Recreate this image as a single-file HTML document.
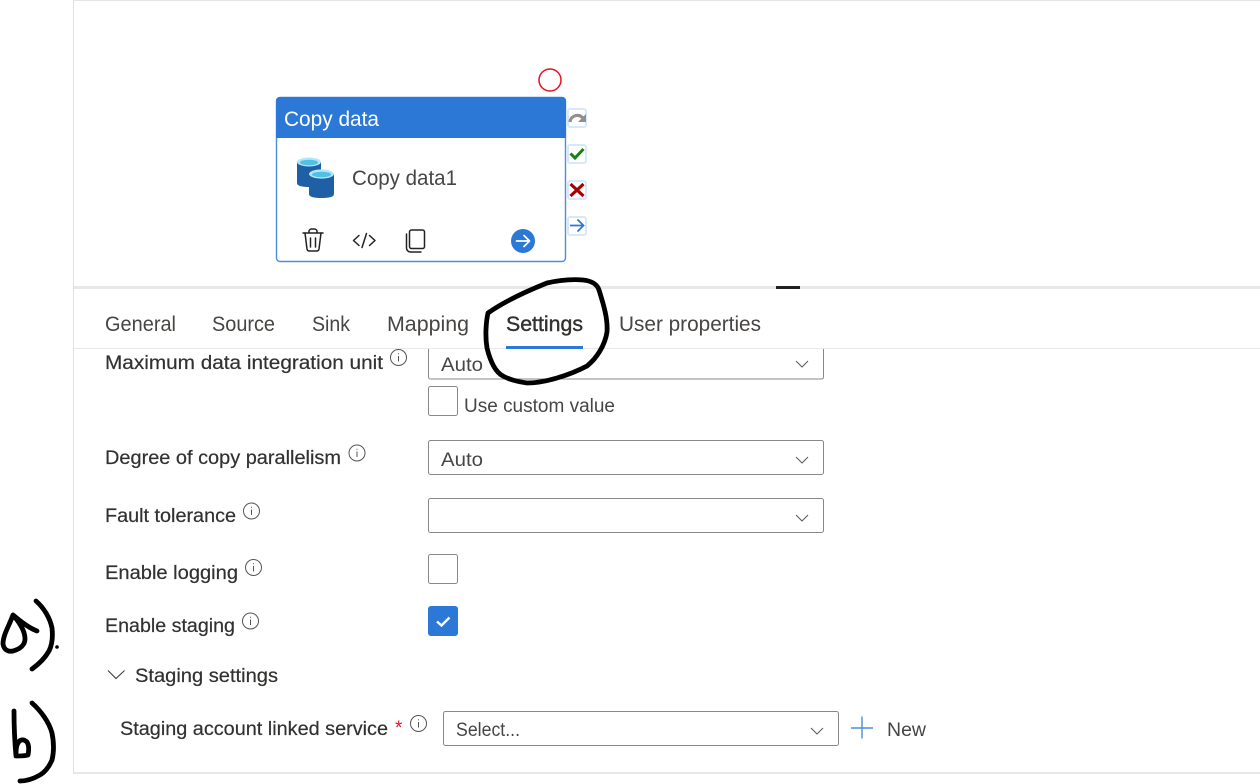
<!DOCTYPE html>
<html><head><meta charset="utf-8"><style>
html,body{margin:0;padding:0;background:#fff;width:1260px;height:784px;overflow:hidden}
svg{display:block}
text{font-family:"Liberation Sans",Arial,sans-serif;fill:#323130}
.l{font-size:19px;stroke:#323130;stroke-width:.2px}
.t{font-size:21px;fill:#484644}
.v{font-size:19px;fill:#484644}
.i{fill:none;stroke:#555;stroke-width:1}
.s{fill:#fff;stroke:#8a8886;stroke-width:1}
.c{fill:none;stroke:#605e5c;stroke-width:1.1}
.h{fill:none;stroke:#000;stroke-width:4.8;stroke-linecap:round;stroke-linejoin:round}
</style></head><body>
<svg width="1260" height="784" viewBox="0 0 1260 784" xmlns="http://www.w3.org/2000/svg">
<defs>
<g id="info"><circle cx="0" cy="0" r="8" class="i"/><path d="M0 -1.5V4M0 -4.3V-3.2" class="i"/></g>
</defs>
<!-- frame -->
<path d="M73.5 0V773.5H1260" fill="none" stroke="#e1e1e1" stroke-width="1"/>
<rect x="73" y="0" width="1187" height="1" fill="#e6e6e6"/>
<rect x="74" y="772" width="1186" height="2" fill="#e8e8e8"/>
<rect x="74" y="286" width="1186" height="3" fill="#e8e8e8"/>
<rect x="776" y="286" width="24" height="3" fill="#222"/>
<rect x="74" y="348" width="1186" height="1" fill="#e8e8e8"/>

<!-- red circle -->
<circle cx="550" cy="80" r="11" fill="none" stroke="#e81123" stroke-width="1.500"/>

<!-- activity -->
<rect x="276.500" y="97.500" width="289" height="164" rx="3.500" fill="#fff" stroke="#4a8fdc" stroke-width="1.400"/>
<path d="M276 101a4 4 0 0 1 4-4H562a4 4 0 0 1 4 4V138H276Z" fill="#2b78d6"/>
<text x="284" y="126" font-size="21" style="fill:#fff" textLength="95" lengthAdjust="spacingAndGlyphs">Copy data</text>
<text x="352" y="185" font-size="21" style="fill:#484644" textLength="105" lengthAdjust="spacingAndGlyphs">Copy data1</text>
<!-- db icon -->
<path d="M297 162V183c0 3 5 4 12 4s12-1 12-4V162Z" fill="#1f5fa6"/>
<ellipse cx="309" cy="162" rx="12" ry="4.500" fill="#b5e6f5"/><ellipse cx="309" cy="162.500" rx="9" ry="2.800" fill="#4fc0e6"/>
<path d="M309 174V194c0 3 5 4 12.500 4s12.500-1 12.500-4V174Z" fill="#1f5fa6"/>
<ellipse cx="321.500" cy="174" rx="12.500" ry="4.600" fill="#b5e6f5"/><ellipse cx="321.500" cy="174.500" rx="9.500" ry="2.800" fill="#4fc0e6"/>
<!-- trash -->
<g fill="none" stroke="#222" stroke-width="1.500" stroke-linecap="round" stroke-linejoin="round">
<path d="M303 233H323M309 233V231.500a2.500 2.500 0 0 1 2.500-2.500h3a2.500 2.500 0 0 1 2.500 2.500V233"/>
<path d="M305 233L307 249a2.500 2.500 0 0 0 2.500 2H316.500a2.500 2.500 0 0 0 2.500-2L321 233"/>
<path d="M310.500 238V247M315.500 238V247"/>
<!-- code -->
<path d="M359 235.500L353.500 240.500L359 245.500M369.500 235.500L375 240.500L369.500 245.500"/>
<path d="M366.500 233.500L362 247.500"/>
<!-- copy -->
<rect x="409.500" y="230" width="15" height="18.500" rx="2"/>
<path d="M406.500 234V248a4 4 0 0 0 4 4H421"/>
</g>
<circle cx="523" cy="241" r="12" fill="#2b78d6"/>
<path d="M516.500 241H529M524 235.500L529.500 241L524 246.500" fill="none" stroke="#fff" stroke-width="1.700" stroke-linecap="round" stroke-linejoin="round"/>
<!-- side buttons -->
<g fill="#fff" stroke="#d9e7fa" stroke-width="2">
<rect x="568" y="109" width="18" height="18" rx="2"/>
<rect x="568" y="145" width="18" height="18" rx="2"/>
<rect x="568" y="181" width="18" height="18" rx="2"/>
<rect x="568" y="217" width="18" height="18" rx="2"/>
</g>
<path d="M570 122C571 115 579 113 584 119" fill="none" stroke="#8f8f8f" stroke-width="3.200"/>
<path d="M578 122H586V114Z" fill="#8f8f8f"/>
<path d="M570.500 153.500L575 158L583.500 149" fill="none" stroke="#1a7f0e" stroke-width="3"/>
<path d="M570.500 184L583.500 196M583.500 184L570.500 196" fill="none" stroke="#a80000" stroke-width="3.200"/>
<path d="M570 225.500H583M577.500 219.500L583.500 225.500L577.500 231.500" fill="none" stroke="#2b78d6" stroke-width="1.800"/>

<!-- tabs -->
<text class="t" x="105" y="331" textLength="71" lengthAdjust="spacingAndGlyphs">General</text>
<text class="t" x="212" y="331" textLength="63" lengthAdjust="spacingAndGlyphs">Source</text>
<text class="t" x="312" y="331" textLength="38" lengthAdjust="spacingAndGlyphs">Sink</text>
<text class="t" x="387" y="331" textLength="82" lengthAdjust="spacingAndGlyphs">Mapping</text>
<text class="t" x="506" y="331" textLength="77" lengthAdjust="spacingAndGlyphs" style="fill:#323130;stroke:#323130;stroke-width:.4px">Settings</text>
<text class="t" x="619" y="331" textLength="142" lengthAdjust="spacingAndGlyphs">User properties</text>
<rect x="506" y="346" width="77" height="3" fill="#2b78d6"/>

<!-- labels -->
<text class="l" x="105" y="369" textLength="278" lengthAdjust="spacingAndGlyphs">Maximum data integration unit</text>
<use href="#info" x="398.500" y="357.500"/>
<text class="l" x="105" y="464" textLength="236" lengthAdjust="spacingAndGlyphs">Degree of copy parallelism</text>
<use href="#info" x="357" y="453"/>
<text class="l" x="105" y="522" textLength="131" lengthAdjust="spacingAndGlyphs">Fault tolerance</text>
<use href="#info" x="251.500" y="511"/>
<text class="l" x="105" y="579" textLength="133" lengthAdjust="spacingAndGlyphs">Enable logging</text>
<use href="#info" x="253.500" y="567.500"/>
<text class="l" x="105" y="632" textLength="130" lengthAdjust="spacingAndGlyphs">Enable staging</text>
<use href="#info" x="250.500" y="621"/>
<path d="M108 670.500L116 678.500L124.500 670.500" fill="none" stroke="#484644" stroke-width="1.200"/>
<text class="l" x="135" y="682" textLength="143" lengthAdjust="spacingAndGlyphs">Staging settings</text>
<text class="l" x="120" y="735" textLength="268" lengthAdjust="spacingAndGlyphs">Staging account linked service</text>
<text x="395" y="734" font-size="19" style="fill:#e81123">*</text>
<use href="#info" x="418.500" y="723.500"/>

<!-- inputs -->
<path d="M428.500 349V377a2 2 0 0 0 2 2H821.500a2 2 0 0 0 2-2V349" fill="#fff" stroke="#8a8886"/>
<text class="v" x="441" y="371" textLength="42" lengthAdjust="spacingAndGlyphs">Auto</text>
<path d="M796 361L802 367L808 361" class="c"/>
<rect x="428.500" y="386.500" width="29" height="29" rx="2" class="s"/>
<text class="v" x="464" y="412" textLength="151" lengthAdjust="spacingAndGlyphs">Use custom value</text>

<rect x="428.500" y="440.500" width="395" height="34" rx="2" class="s"/>
<text class="v" x="441" y="466" textLength="42" lengthAdjust="spacingAndGlyphs">Auto</text>
<path d="M796 457L802 463L808 457" class="c"/>

<rect x="428.500" y="498.500" width="395" height="34" rx="2" class="s"/>
<path d="M796 515L802 521L808 515" class="c"/>

<rect x="428.500" y="554.500" width="29" height="29" rx="2" class="s"/>
<rect x="428" y="606" width="30" height="30" rx="3" fill="#2b78d6"/>
<path d="M437 621.500L441.500 625.500L449.500 617.500" fill="none" stroke="#fff" stroke-width="2.400"/>

<rect x="443.500" y="711.500" width="395" height="34" rx="2" class="s"/>
<text class="v" x="456" y="736" textLength="64" lengthAdjust="spacingAndGlyphs">Select...</text>
<path d="M811 728L817 734L823 728" class="c"/>
<path d="M851 728H873M862 716.500V738.500" fill="none" stroke="#4a8fdc" stroke-width="1.400"/>
<text class="v" x="887" y="736" textLength="39" lengthAdjust="spacingAndGlyphs">New</text>

<!-- handwriting -->
<path class="h" d="M488 313C505 301 527 291 547 283C560 280 572 279 583 280C592 281 597 284 599 290C603 303 608 318 607 332C605 345 597 358 587 366C570 375 545 383 527 383C518 382 508 379 503 376C495 372 490 360 487 348C485 336 486 322 488 313Z"/>
<path class="h" d="M13 615C9 626 3 635 3 644C4 650 8 652 13 651C20 649 25 645 25 639C25 631 20 623 13 615C20 621 29 628 37 631"/>
<path class="h" d="M36 601C44 608 50 618 52 628C53 637 52 645 49 651C45 658 39 664 32 669"/>
<circle cx="57" cy="647" r="1.800" fill="#000"/>
<path class="h" d="M14 711C14 725 15 745 16 756C20 756 25 756 28 755C29 750 29 745 27 742C24 739 20 739 18 743C16 746 16 750 16 754"/>
<path class="h" d="M32 703C41 711 49 722 52 733C54 743 54 752 52 760C49 767 45 772 40 775C33 779 27 781 20 781"/>
</svg>
</body></html>
